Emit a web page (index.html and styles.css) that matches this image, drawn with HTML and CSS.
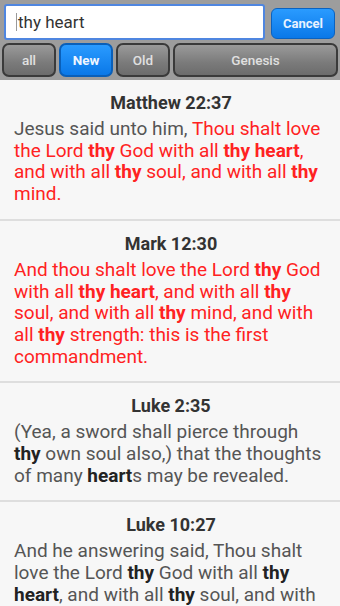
FILE: index.html
```html
<!DOCTYPE html>
<html lang="en">
<head>
  <meta charset="UTF-8" />
  <title>Bible Search</title>
  <link rel="stylesheet" href="styles.css">
</head>
<body>

  <!-- Search header -->
  <div class="header">
    <div class="search-row">
      <div class="search-box"><span class="caret"></span>thy heart</div>
      <div class="cancel-btn">Cancel</div>
    </div>
    <div class="tab-row">
      <div class="tab tab-short">all</div>
      <div class="tab tab-short active">New</div>
      <div class="tab tab-short">Old</div>
      <div class="tab tab-book">Genesis</div>
    </div>
  </div>

  <!-- Results -->
  <div class="results">
    <div class="verse">
      <div class="verse-ref">Matthew 22:37</div>
      <div class="verse-text">Jesus said unto him, <span class="red">Thou shalt love the Lord <b>thy</b> God with all <b>thy heart</b>, and with all <b>thy</b> soul, and with all <b>thy</b> mind.</span></div>
    </div>
    <div class="verse">
      <div class="verse-ref">Mark 12:30</div>
      <div class="verse-text"><span class="red">And thou shalt love the Lord <b>thy</b> God with all <b>thy heart</b>, and with all <b>thy</b> soul, and with all <b>thy</b> mind, and with all <b>thy</b> strength: this is the first commandment.</span></div>
    </div>
    <div class="verse">
      <div class="verse-ref">Luke 2:35</div>
      <div class="verse-text">(Yea, a sword shall pierce through <b>thy</b> own soul also,) that the thoughts of many <b>heart</b>s may be revealed.</div>
    </div>
    <div class="verse">
      <div class="verse-ref">Luke 10:27</div>
      <div class="verse-text">And he answering said, Thou shalt love the Lord <b>thy</b> God with all <b>thy heart</b>, and with all <b>thy</b> soul, and with all <b>thy</b> strength, and with all <b>thy</b> mind; and <b>thy</b> neighbour as thyself.</div>
    </div>
  </div>

</body>
</html>
```

FILE: styles.css
```css
body {
  margin: 0;
  font-family: Roboto, 'Noto Sans', sans-serif;
  background: #f7f7f7;
  height: 606px;
  overflow: hidden;
}

.header {
  background: #9d9d9d;
  padding: 4px 2px 3px 2px;
}

.search-row {
  display: flex;
  align-items: center;
  gap: 6px;
  padding: 0 3px 0 2px;
  height: 36px;
}

.search-box {
  flex: 1;
  height: 36px;
  box-sizing: border-box;
  background: white;
  border: 2px solid #4f86e0;
  border-radius: 3px;
  display: flex;
  align-items: center;
  padding-left: 10px;
  font-size: 17px;
  color: #333;
}

.caret {
  width: 1px;
  height: 18px;
  background: #999;
  margin-right: 1px;
}

.cancel-btn {
  width: 64px;
  height: 31px;
  margin-top: 3px;
  box-sizing: border-box;
  border-radius: 6px;
  background: linear-gradient(#2a9bff, #0a78e8);
  border: 1px solid #0a62c0;
  color: #e8f2ff;
  font-size: 13px;
  font-weight: bold;
  display: flex;
  align-items: center;
  justify-content: center;
}

.tab-row {
  display: flex;
  gap: 3px;
  margin-top: 3px;
  height: 34px;
}

.tab {
  box-sizing: border-box;
  height: 34px;
  border: 2px solid #3a3a3a;
  border-radius: 7px;
  background: linear-gradient(#9a9a9a, #7a7a7a 60%, #6c6c6c);
  color: #e0e0e0;
  font-size: 13.5px;
  font-weight: 500;
  display: flex;
  align-items: center;
  justify-content: center;
}

.tab-short {
  width: 54px;
}

.tab-book {
  flex: 1;
}

.tab.active {
  background: linear-gradient(#2a9bff, #0a78e8);
  border-color: #0a5fb8;
  color: #f0f6ff;
  font-weight: bold;
}

.verse {
  padding: 12px 12px 14px 14px;
  border-bottom: 2px solid #dedede;
}

.verse-ref {
  text-align: center;
  font-size: 18px;
  font-weight: bold;
  line-height: 21px;
  color: #333;
}

.verse-text {
  margin-top: 5px;
  font-size: 19px;
  line-height: 21.7px;
  color: #555;
}

.verse-text b {
  color: #222;
}

.red,
.red b {
  color: #ff2222;
}
```
